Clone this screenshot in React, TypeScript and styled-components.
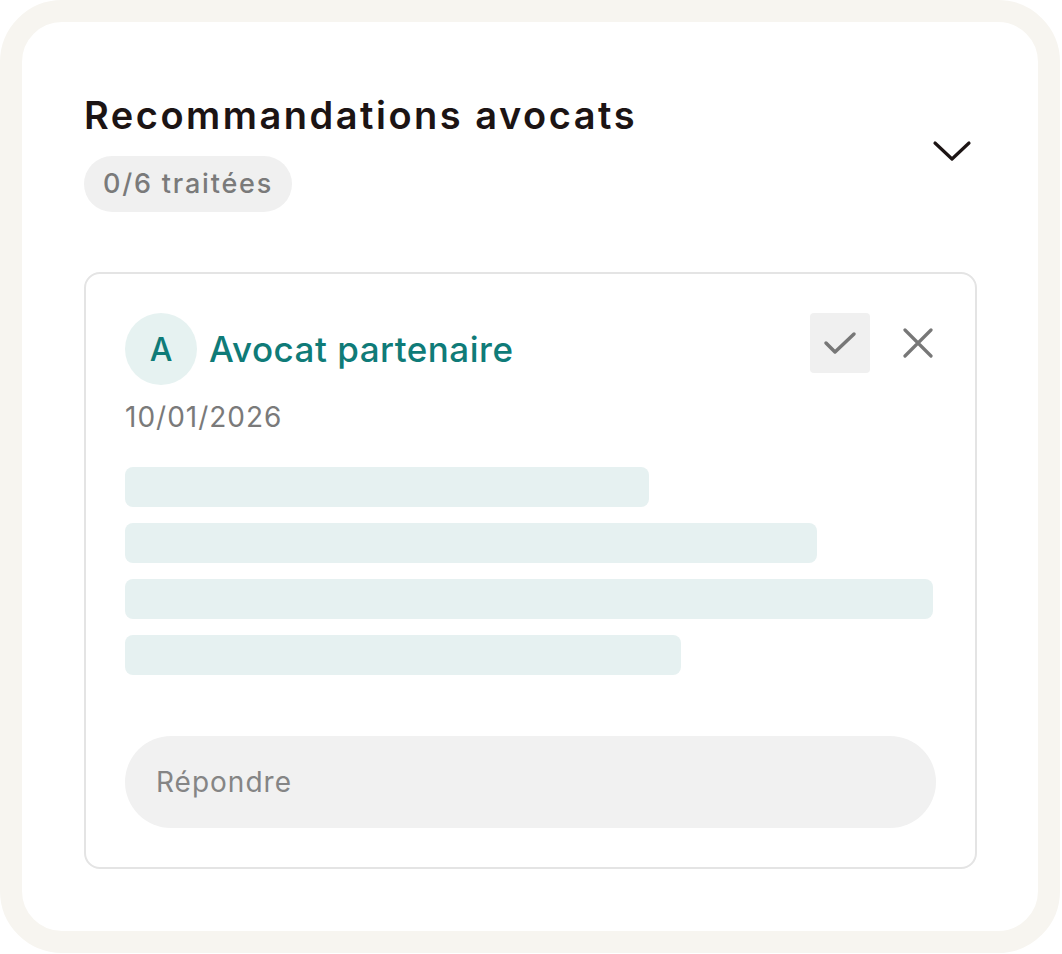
import React from 'react';
import styled, { createGlobalStyle } from 'styled-components';

const GlobalStyle = createGlobalStyle`
  body {
    margin: 0;
    background: #ffffff;
    font-family: Inter, 'Noto Sans', 'Liberation Sans', sans-serif;
  }
`;

const Frame = styled.div`
  width: 1060px;
  height: 953px;
  box-sizing: border-box;
  border: 22px solid #f7f5f0;
  border-radius: 62px;
  background: #ffffff;
  padding: 70px 61px 0 62px;
`;

const Header = styled.div`
  display: flex;
  align-items: center;
  justify-content: space-between;
`;

const HeaderText = styled.div`
  display: flex;
  flex-direction: column;
  align-items: flex-start;
  gap: 18px;
`;

const Title = styled.h1`
  margin: 0;
  font-size: 38px;
  line-height: 46px;
  font-weight: 600;
  color: #1c1414;
  letter-spacing: 2.5px;
`;

const Pill = styled.span`
  display: inline-block;
  padding: 12px 19px;
  border-radius: 28px;
  background: #f0f0f0;
  color: #7a7a7a;
  font-size: 27px;
  line-height: 32px;
  font-weight: 500;
  letter-spacing: 1.8px;
`;

const Toggle = styled.button`
  border: none;
  background: none;
  padding: 0;
  margin-right: 5px;
  width: 40px;
  height: 40px;
  display: flex;
  align-items: center;
  justify-content: center;
  cursor: pointer;
`;

const Card = styled.div`
  margin-top: 60px;
  border: 2px solid #e4e4e4;
  border-radius: 16px;
  padding: 39px;
`;

const CardTop = styled.div`
  display: flex;
  align-items: flex-start;
  justify-content: space-between;
`;

const Author = styled.div`
  display: flex;
  align-items: center;
  gap: 12px;
`;

const Avatar = styled.div`
  width: 72px;
  height: 72px;
  border-radius: 50%;
  background: #e6f2f1;
  color: #0f7b78;
  display: flex;
  align-items: center;
  justify-content: center;
  font-size: 32px;
  font-weight: 500;
`;

const Name = styled.span`
  color: #0f7b78;
  font-size: 35px;
  font-weight: 500;
  line-height: 40px;
  letter-spacing: 0.5px;
`;

const Actions = styled.div`
  display: flex;
  align-items: center;
  gap: 32px;
  margin-right: 2px;
`;

const IconButton = styled.button<{ $filled?: boolean }>`
  width: ${({ $filled }) => ($filled ? '60px' : '32px')};
  height: 60px;
  border: none;
  border-radius: 4px;
  padding: 0;
  background: ${({ $filled }) => ($filled ? '#f0f0f0' : 'transparent')};
  display: flex;
  align-items: center;
  justify-content: center;
  cursor: pointer;
`;

const DateText = styled.div`
  margin-top: 15px;
  color: #7a7a7a;
  font-size: 28px;
  line-height: 34px;
  letter-spacing: 1px;
`;

const Lines = styled.div`
  margin-top: 33px;
  display: flex;
  flex-direction: column;
  gap: 16px;
`;

const SkeletonLine = styled.div`
  height: 40px;
  border-radius: 8px;
  background: #e6f1f1;
`;

const ReplyInput = styled.input`
  margin-top: 61px;
  display: block;
  width: 100%;
  box-sizing: border-box;
  height: 92px;
  border: none;
  border-radius: 46px;
  background: #f1f1f1;
  padding: 0 31px;
  font-family: inherit;
  font-size: 28px;
  letter-spacing: 1px;
  color: #333;
  outline: none;
  &::placeholder {
    color: #858585;
  }
`;

const lineWidths = [524, 692, 808, 556];

export default function App() {
  return (
    <>
      <GlobalStyle />
      <Frame>
        <Header>
          <HeaderText>
            <Title>Recommandations avocats</Title>
            <Pill>0/6 traitées</Pill>
          </HeaderText>
          <Toggle aria-label="Replier">
            <svg width="40" height="40" viewBox="0 0 40 40" fill="none">
              <polyline points="3,11 20,27 37,11" stroke="#1c1414" strokeWidth="3.2" strokeLinecap="round" strokeLinejoin="round" />
            </svg>
          </Toggle>
        </Header>

        <Card>
          <CardTop>
            <div>
              <Author>
                <Avatar>A</Avatar>
                <Name>Avocat partenaire</Name>
              </Author>
              <DateText>10/01/2026</DateText>
            </div>
            <Actions>
              <IconButton $filled aria-label="Valider">
                <svg width="34" height="26" viewBox="0 0 34 26" fill="none">
                  <polyline points="3,13 12,22 31,4" stroke="#777" strokeWidth="3.5" strokeLinecap="round" strokeLinejoin="round" />
                </svg>
              </IconButton>
              <IconButton aria-label="Ignorer">
                <svg width="30" height="30" viewBox="0 0 30 30" fill="none">
                  <path d="M2 2 L28 28 M28 2 L2 28" stroke="#777" strokeWidth="3.2" strokeLinecap="round" />
                </svg>
              </IconButton>
            </Actions>
          </CardTop>

          <Lines>
            {lineWidths.map((w, i) => (
              <SkeletonLine key={i} style={{ width: w }} />
            ))}
          </Lines>

          <ReplyInput placeholder="Répondre" />
        </Card>
      </Frame>
    </>
  );
}
